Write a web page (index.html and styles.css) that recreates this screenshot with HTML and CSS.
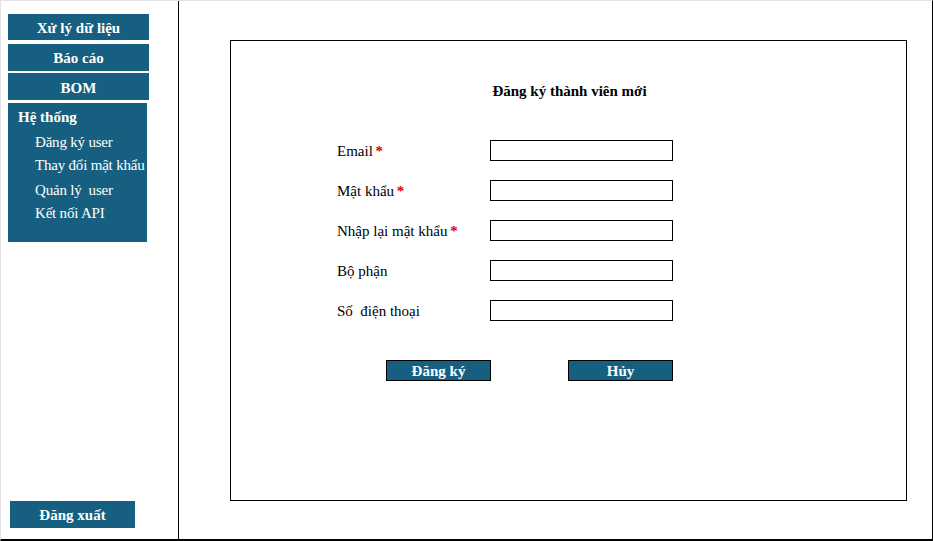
FILE: index.html
```html
<!DOCTYPE html>
<html lang="vi">
<head>
<meta charset="utf-8">
<title>Đăng ký thành viên mới</title>
<link rel="stylesheet" href="styles.css">
</head>
<body>
<div class="frame">
  <aside class="sidebar">
    <a class="nav-btn nav-first">Xử lý dữ liệu</a>
    <a class="nav-btn nav-second">Báo cáo</a>
    <a class="nav-btn nav-third">BOM</a>
    <div class="nav-group">
      <div class="group-title">Hệ thống</div>
      <ul class="sub-list">
        <li>Đăng ký user</li>
        <li>Thay đổi mật khẩu</li>
        <li>Quản lý&nbsp; user</li>
        <li>Kết nối API</li>
      </ul>
    </div>
    <a class="logout-btn">Đăng xuất</a>
  </aside>
  <main class="main">
    <section class="panel">
      <h1 class="panel-title">Đăng ký thành viên mới</h1>
      <form class="form">
        <label class="label">Email <span class="req">*</span></label>
        <input class="field" type="text">
        <label class="label">Mật khẩu <span class="req">*</span></label>
        <input class="field" type="password">
        <label class="label">Nhập lại mật khẩu <span class="req">*</span></label>
        <input class="field" type="password">
        <label class="label">Bộ phận</label>
        <input class="field" type="text">
        <label class="label">Số&nbsp; điện thoại</label>
        <input class="field" type="text">
      </form>
      <div class="actions">
        <button class="btn" type="button">Đăng ký</button>
        <button class="btn" type="button">Hủy</button>
      </div>
    </section>
  </main>
</div>
</body>
</html>
```
FILE: styles.css
```css
* { box-sizing: border-box; }
html, body { margin: 0; padding: 0; background: #fff; }
body {
  font-family: "Liberation Serif", "Times New Roman", serif;
  font-size: 15px;
  color: #000;
}
.frame {
  width: 933px;
  height: 541px;
  display: flex;
  border-top: 1px solid #e2e2e2;
  border-left: 1px solid #e2e2e2;
  border-right: 1px solid #000;
  border-bottom: 2px solid #000;
}
.sidebar {
  width: 178px;
  border-right: 1px solid #000;
  display: flex;
  flex-direction: column;
  padding: 13px 0 0 7px;
}
.nav-btn {
  display: flex;
  align-items: center;
  justify-content: center;
  width: 141px;
  height: 26px;
  padding-top: 2px;
  background: #165f80;
  color: #fff;
  font-weight: bold;
  font-size: 15px;
}
.nav-second { margin-top: 4px; height: 27px; }
.nav-third { margin-top: 2px; height: 27px; padding-top: 3px; }
.nav-group {
  margin-top: 3px;
  width: 139px;
  height: 139px;
  background: #165f80;
  color: #fff;
  padding: 5px 0 0 10px;
}
.group-title {
  font-weight: bold;
  font-size: 15px;
  line-height: 18px;
}
.sub-list {
  list-style: none;
  margin: 7px 0 0 17px;
  padding: 0;
  white-space: nowrap;
  letter-spacing: -0.2px;
}
.sub-list li {
  line-height: 18px;
  margin-bottom: 5px;
}
.sub-list li:nth-child(2) { margin-bottom: 7px; }
.logout-btn {
  margin-top: auto;
  margin-bottom: 11px;
  margin-left: 2px;
  width: 125px;
  height: 27px;
  padding-top: 2px;
  display: flex;
  align-items: center;
  justify-content: center;
  background: #165f80;
  color: #fff;
  font-weight: bold;
  font-size: 15px;
}
.main {
  flex: 1;
  padding: 39px 0 0 51px;
}
.panel {
  width: 677px;
  height: 461px;
  border: 1px solid #000;
  display: flex;
  flex-direction: column;
}
.panel-title {
  margin: 41px 0 0 2px;
  font-size: 15px;
  font-weight: bold;
  line-height: 18px;
  text-align: center;
}
.form {
  margin: 40px 0 0 106px;
  display: grid;
  grid-template-columns: 153px 183px;
  row-gap: 19px;
  align-items: center;
}
.label {
  font-size: 15px;
  line-height: 19px;
  height: 21px;
  padding-top: 2px;
}
.req { color: #e00000; font-weight: bold; margin-left: -1px; }
.field {
  width: 183px;
  height: 21px;
  border: 1px solid #000;
  margin: 0;
  padding: 0 3px;
  background: #fff;
  font: inherit;
}
.actions {
  margin: 39px 0 0 155px;
  display: flex;
  gap: 77px;
}
.btn {
  width: 105px;
  height: 21px;
  margin: 0;
  padding: 1px 0 0 0;
  border: 1px solid #000;
  background: #165f80;
  color: #fff;
  font-family: inherit;
  font-size: 15px;
  font-weight: bold;
  line-height: 19px;
}
```
